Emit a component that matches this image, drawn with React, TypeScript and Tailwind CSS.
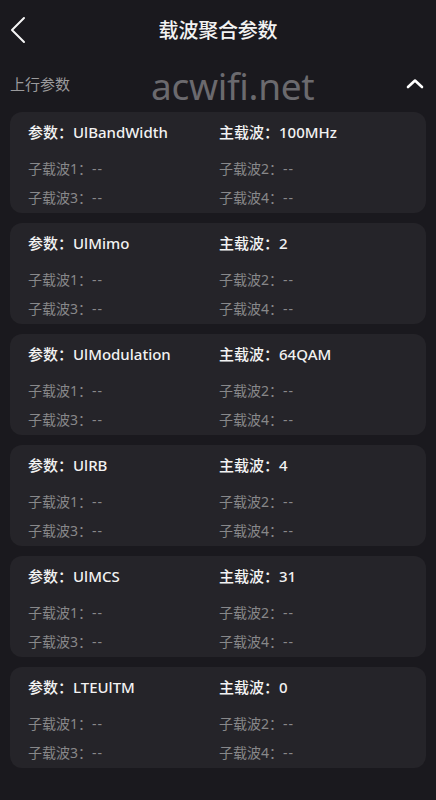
import React from "react";

const items = [
  { name: "UlBandWidth", main: "100MHz" },
  { name: "UlMimo", main: "2" },
  { name: "UlModulation", main: "64QAM" },
  { name: "UlRB", main: "4" },
  { name: "UlMCS", main: "31" },
  { name: "LTEUlTM", main: "0" },
];

const font = { fontFamily: '"Noto Sans", "Noto Sans CJK SC", sans-serif' };

function Sub({ n }: { n: number }) {
  return (
    <div className="h-[28px] flex items-center">
      子载波{n}：<span className="tracking-[1px]">--</span>
    </div>
  );
}

function Card({ name, main }: { name: string; main: string }) {
  return (
    <div className="rounded-[12px] bg-[#252429] pl-[18px] pt-[8px] pb-[2px]">
      <div className="grid grid-cols-[191px_1fr] h-[24px] items-center text-[15px] font-medium text-[#f2f2f2]">
        <div>参数：{name}</div>
        <div>主载波：{main}</div>
      </div>
      <div className="mt-[10px] grid grid-cols-[191px_1fr] gap-y-[1px] text-[14px] text-[#88888a]">
        <Sub n={1} />
        <Sub n={2} />
        <Sub n={3} />
        <Sub n={4} />
      </div>
    </div>
  );
}

export default function App() {
  return (
    <div className="w-[436px] h-[800px] bg-[#1a191e] overflow-hidden relative" style={font}>
      <div className="relative h-[62px] flex items-center justify-center">
        <svg className="absolute left-[8px] top-[14px]" width="22" height="32" viewBox="0 0 22 32">
          <polyline points="16,4 4,16 16,28" fill="none" stroke="#f5f5f5" strokeWidth="2" strokeLinecap="round" strokeLinejoin="round" />
        </svg>
        <div className="text-[20px] font-medium text-[#f2f2f2] tracking-[-0.2px]">载波聚合参数</div>
      </div>
      <div className="relative h-[44px] flex items-center justify-between pl-[10px] pr-[12px]">
        <div className="text-[15px] text-[#9a9a9c]">上行参数</div>
        <svg width="18" height="12" viewBox="0 0 18 12">
          <polyline points="2,9 9,2.5 16,9" fill="none" stroke="#ffffff" strokeWidth="2.6" strokeLinecap="round" strokeLinejoin="round" />
        </svg>
        <div className="absolute left-[151px] top-[-4px] text-[37px] text-[#6b6a6e] tracking-[-0.3px]" style={{ fontFamily: '"Noto Sans", sans-serif' }}>
          acwifi.net
        </div>
      </div>
      <div className="px-[10px] pt-[6px] flex flex-col gap-[10px]">
        {items.map((it) => (
          <Card key={it.name} name={it.name} main={it.main} />
        ))}
      </div>
    </div>
  );
}
